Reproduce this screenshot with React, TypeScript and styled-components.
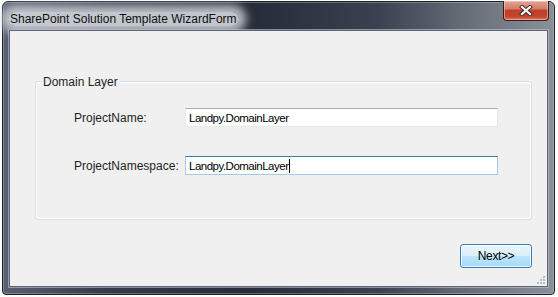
import React from "react";
import styled, { createGlobalStyle } from "styled-components";

const GlobalStyle = createGlobalStyle`
  html, body {
    margin: 0;
    padding: 0;
    background: #ffffff;
  }
  body {
    font-family: "Segoe UI", "Liberation Sans", Arial, sans-serif;
    font-size: 12px;
  }
`;

const uiFont = `"Segoe UI", "Liberation Sans", Arial, sans-serif`;

// Aero style window frame
const Window = styled.div`
  position: relative;
  box-sizing: border-box;
  margin: 1px 0 0 2px;
  width: 553px;
  height: 294px;
  display: flex;
  flex-direction: column;
  border: 1px solid #1c2029;
  border-radius: 6px 6px 4px 4px;
  background: linear-gradient(
    90deg,
    #596071 0%,
    #353c4b 18%,
    #262c39 45%,
    #3a4150 68%,
    #6c727d 86%,
    #8a9098 100%
  );
  box-shadow: inset 0 0 0 1px rgba(200, 210, 225, 0.35);
`;

const TitleBar = styled.div`
  display: flex;
  align-items: flex-start;
  height: 28px;
  padding: 0 5px 0 5px;
`;

const TitleText = styled.span`
  margin-top: 10px;
  padding: 0 2px;
  font-family: ${uiFont};
  font-size: 12px;
  line-height: 14px;
  color: #101010;
  border-radius: 10px;
  background: rgba(210, 214, 220, 0.9);
  box-shadow: 0 0 10px 7px rgba(210, 214, 220, 0.85);
`;

const CloseButton = styled.div`
  margin-left: auto;
  margin-top: -1px;
  width: 46px;
  height: 20px;
  box-sizing: border-box;
  display: flex;
  align-items: center;
  justify-content: center;
  border: 1px solid #3e1a14;
  border-top: none;
  border-radius: 0 0 4px 4px;
  background: linear-gradient(
    180deg,
    #e5a493 0%,
    #d47e6c 40%,
    #bf3f28 50%,
    #c2442c 80%,
    #d7765c 100%
  );
  box-shadow: inset 0 0 0 1px rgba(255, 210, 200, 0.55);
`;

const Content = styled.div`
  position: relative;
  flex: 1;
  margin: 0 6px 7px 6px;
  display: flex;
  flex-direction: column;
  border: 1px solid #5e6573;
  background: #f0f0f0;
  box-shadow: 0 0 0 1px rgba(190, 198, 210, 0.6);
`;

const GroupBox = styled.div`
  box-sizing: border-box;
  height: 139px;
  margin: 50px 15px 0 25px;
  border: 1px solid #d5dfe5;
  border-radius: 3px;
  box-shadow: inset 0 0 0 1px #ffffff;
`;

const Legend = styled.div`
  display: table;
  margin: -7px 0 0 5px;
  padding: 0 2px;
  background: #f0f0f0;
  font-family: ${uiFont};
  font-size: 12px;
  line-height: 14px;
  color: #1e1e1e;
`;

const Fields = styled.div`
  display: grid;
  grid-template-columns: 111px 313px;
  row-gap: 29px;
  align-items: center;
  margin: 19px 0 0 38px;
`;

const Label = styled.span`
  font-family: ${uiFont};
  font-size: 12px;
  color: #1e1e1e;
`;

const TextBox = styled.div<{ $focused?: boolean }>`
  box-sizing: border-box;
  height: 19px;
  display: flex;
  align-items: center;
  padding-left: 3px;
  background: #ffffff;
  border: 1px solid ${(p) => (p.$focused ? "#a4c9e3" : "#e3e9ef")};
  border-top-color: ${(p) => (p.$focused ? "#3d7bad" : "#abadb3")};
  font-family: ${uiFont};
  font-size: 11.5px;
  letter-spacing: -0.5px;
  color: #000000;
  white-space: nowrap;
`;

const Caret = styled.span`
  display: inline-block;
  width: 1px;
  height: 14px;
  margin-left: 1px;
  background: #000000;
`;

const Footer = styled.div`
  display: flex;
  justify-content: flex-end;
  margin: 24px 15px 0 0;
`;

const Button = styled.button`
  box-sizing: border-box;
  width: 72px;
  height: 24px;
  padding: 0;
  border: 1px solid #3c7fb1;
  border-radius: 3px;
  background: linear-gradient(
    180deg,
    #eaf6fd 0%,
    #d9f0fc 50%,
    #bee6fd 50%,
    #a7d9f5 100%
  );
  box-shadow: inset 0 0 0 1px rgba(255, 255, 255, 0.7);
  font-family: ${uiFont};
  font-size: 12px;
  letter-spacing: -0.4px;
  color: #000000;
`;

const Grip = styled.svg`
  position: absolute;
  right: 2px;
  bottom: 2px;
`;

const fields = [
  { label: "ProjectName:", value: "Landpy.DomainLayer", focused: false },
  { label: "ProjectNamespace:", value: "Landpy.DomainLayer", focused: true },
];

const App: React.FC = () => {
  return (
    <>
      <GlobalStyle />
      <Window>
        <TitleBar>
          <TitleText>SharePoint Solution Template WizardForm</TitleText>
          <CloseButton>
            <svg width="14" height="11" viewBox="0 0 14 11">
              <path
                d="M3 2 L11 9 M11 2 L3 9"
                stroke="#3a2a28"
                strokeWidth="4"
                strokeLinecap="square"
              />
              <path
                d="M3 2 L11 9 M11 2 L3 9"
                stroke="#ffffff"
                strokeWidth="2.2"
                strokeLinecap="square"
              />
            </svg>
          </CloseButton>
        </TitleBar>
        <Content>
          <GroupBox>
            <Legend>Domain Layer</Legend>
            <Fields>
              {fields.map((f) => (
                <React.Fragment key={f.label}>
                  <Label>{f.label}</Label>
                  <TextBox $focused={f.focused}>
                    {f.value}
                    {f.focused && <Caret />}
                  </TextBox>
                </React.Fragment>
              ))}
            </Fields>
          </GroupBox>
          <Footer>
            <Button>Next&gt;&gt;</Button>
          </Footer>
          <Grip width="8" height="8" viewBox="0 0 8 8">
            {[
              [6, 0],
              [6, 3],
              [3, 3],
              [6, 6],
              [3, 6],
              [0, 6],
            ].map(([x, y]) => (
              <rect key={`${x}-${y}`} x={x} y={y} width="2" height="2" fill="#b7bcc3" />
            ))}
          </Grip>
        </Content>
      </Window>
    </>
  );
};

export default App;
